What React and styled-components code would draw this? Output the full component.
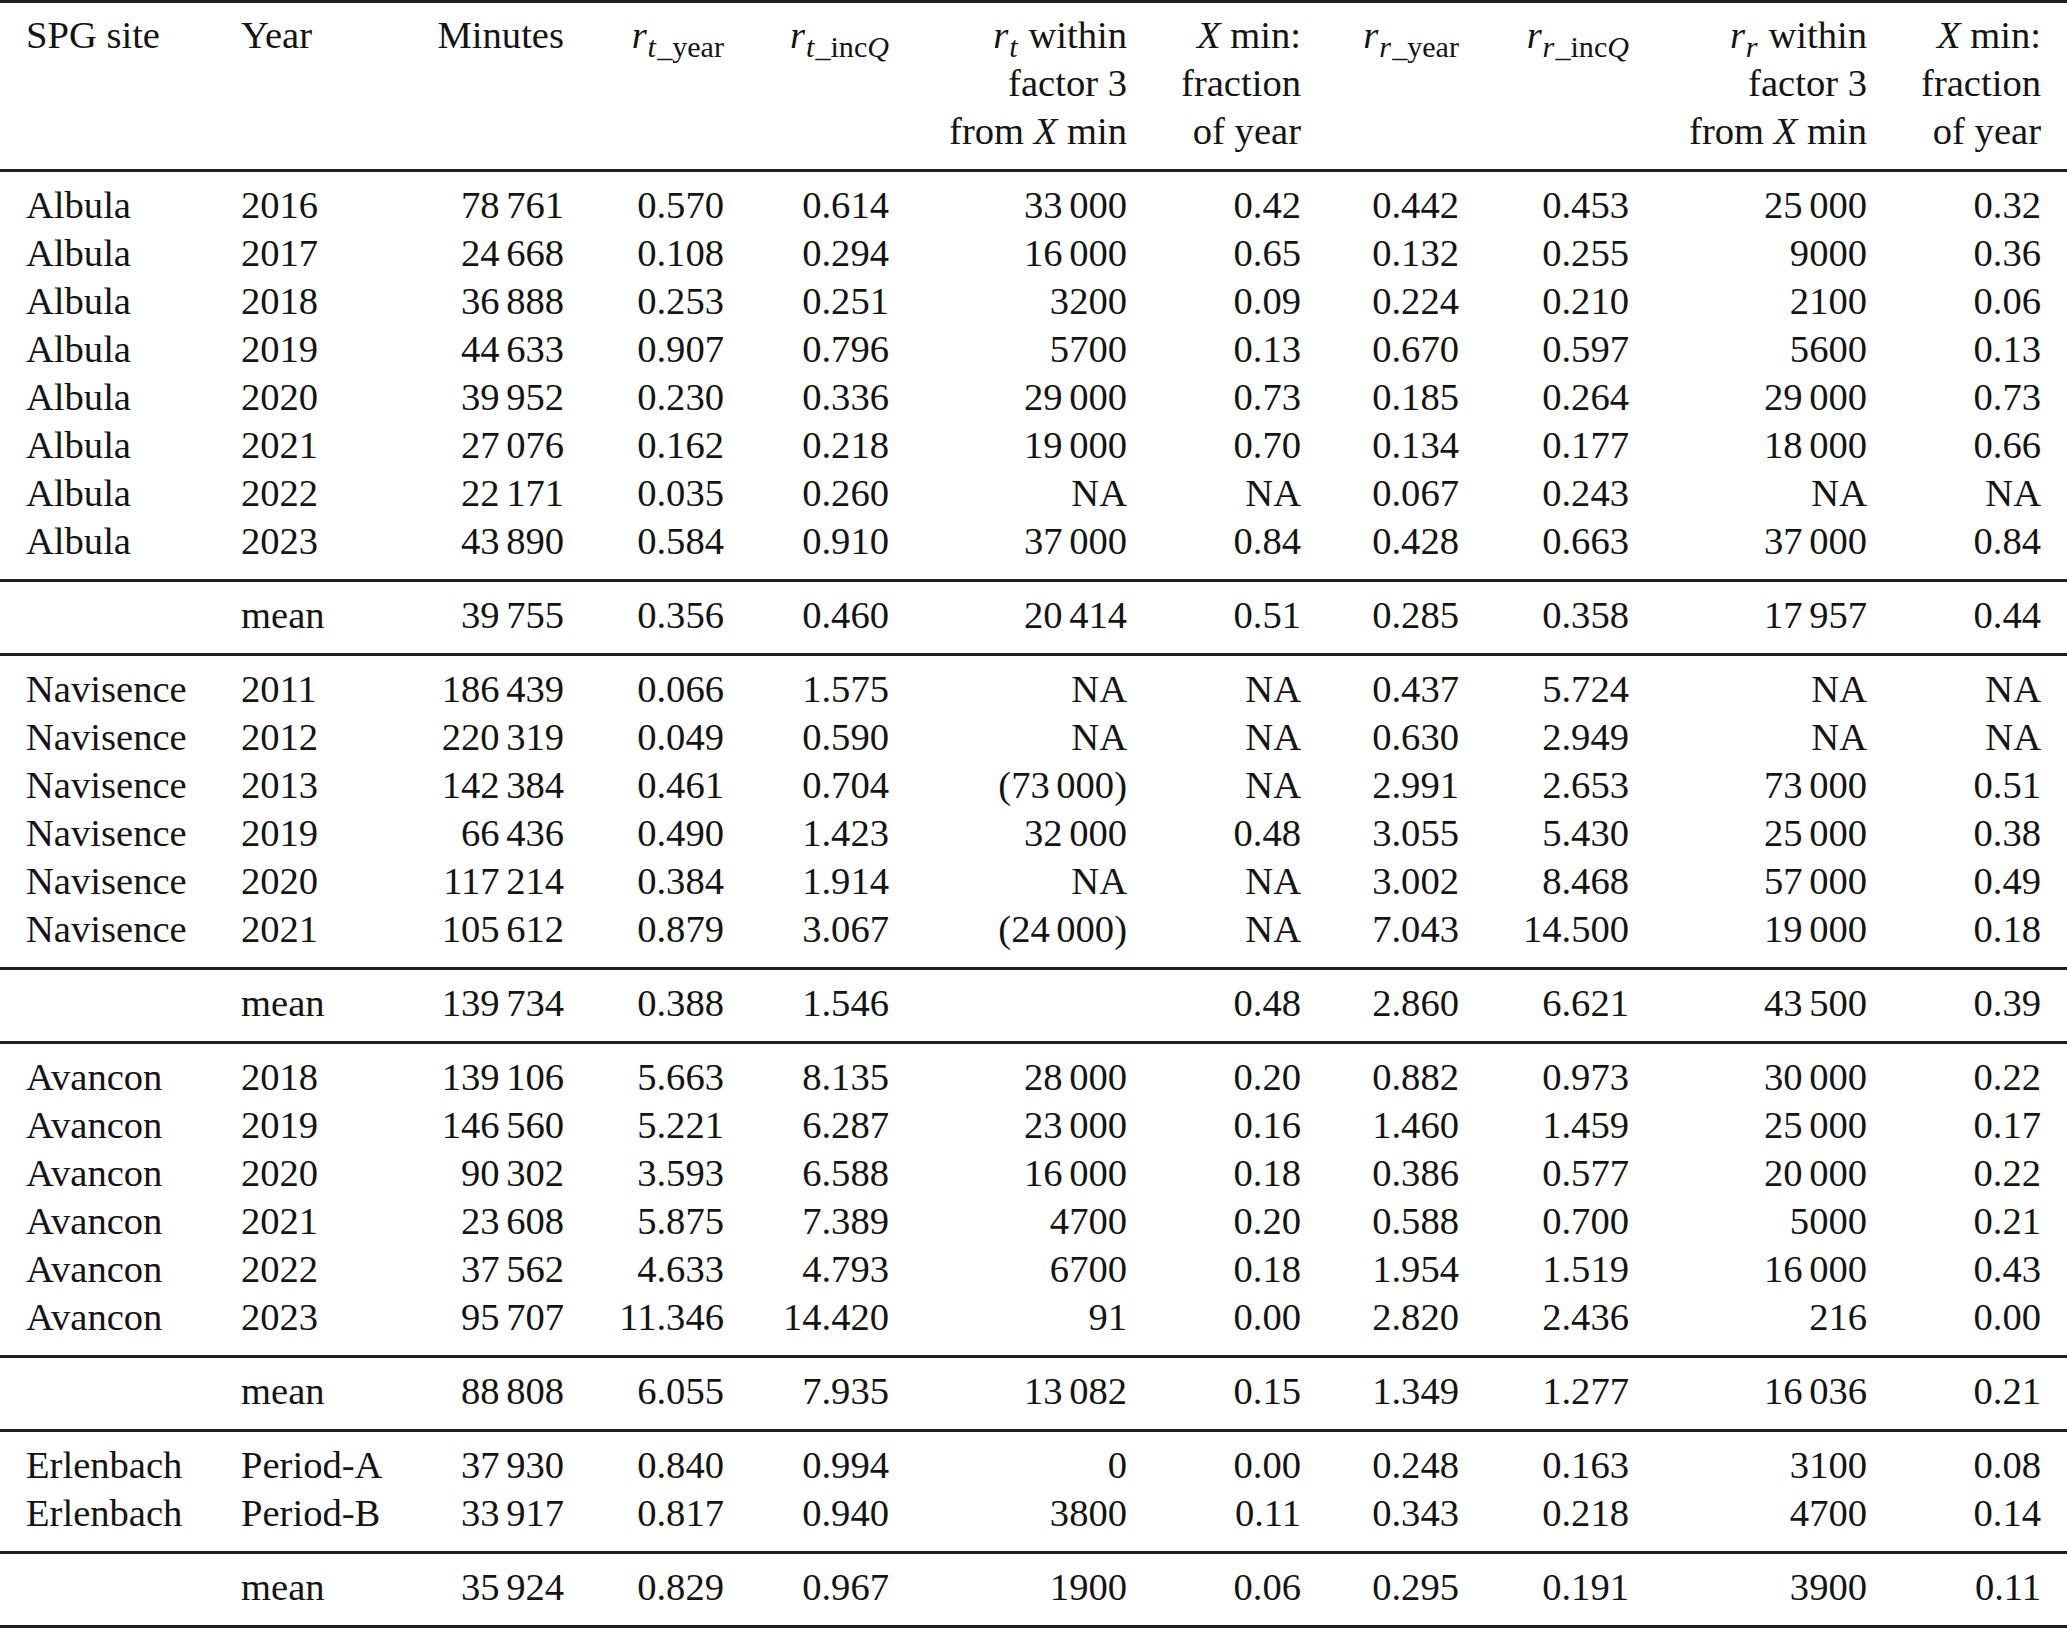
import React from "react";
import styled, { createGlobalStyle } from "styled-components";

const Global = createGlobalStyle`
  html, body { margin: 0; padding: 0; background: #ffffff; }
  body { font-family: "Liberation Serif", "Times New Roman", serif; color: #141414; }
`;

const COLS = "220px 180px 164px 160px 165px 238px 174px 158px 170px 238px 200px";

const Table = styled.div`
  width: 2067px;
  font-size: 38.6px;
  line-height: 48px;
  border-top: 3px solid #1e1e1e;
`;

const Head = styled.div`
  display: grid;
  grid-template-columns: ${COLS};
  align-items: start;
  padding: 8px 0 14px;
  border-bottom: 3px solid #1e1e1e;
`;

const Group = styled.div`
  padding: 9px 0 14px;
  border-bottom: 3px solid #1e1e1e;
`;

const Row = styled.div`
  display: grid;
  grid-template-columns: ${COLS};
  height: 48px;
`;

const Cell = styled.div`
  white-space: nowrap;
  text-align: ${(p) => (p.$left ? "left" : "right")};
  padding-left: ${(p) => p.$pl || 0}px;
  padding-right: ${(p) => p.$pr || 0}px;
`;

const Thin = styled.span`
  display: inline-block;
  width: 0.17em;
`;

const I = styled.i`
  font-style: italic;
`;

const Sub = styled.sub`
  font-size: 0.78em;
  line-height: 0;
  vertical-align: -0.3em;
`;

const SubVar = styled.i`
  font-style: italic;
  margin-left: 0.03em;
  margin-right: 0.04em;
`;

function num(s) {
  const parts = String(s).split(" ");
  return parts.map((p, i) => (
    <React.Fragment key={i}>
      {i > 0 && <Thin />}
      {p}
    </React.Fragment>
  ));
}

function cellProps(i) {
  if (i === 0) return { $left: true, $pl: 26 };
  if (i === 1) return { $left: true, $pl: 21 };
  if (i === 10) return { $pr: 26 };
  return {};
}

const R = ({ s, sub }) => (
  <>
    <I>r</I>
    <Sub>
      <SubVar>{s}</SubVar>
      {sub}
    </Sub>
  </>
);

const header = [
  "SPG site",
  "Year",
  "Minutes",
  <R s="t" sub="_year" />,
  <R s="t" sub={<>_inc<I>Q</I></>} />,
  <>
    <R s="t" /> within
    <br />
    factor 3
    <br />
    from <I>X</I> min
  </>,
  <>
    <I>X</I> min:
    <br />
    fraction
    <br />
    of year
  </>,
  <R s="r" sub="_year" />,
  <R s="r" sub={<>_inc<I>Q</I></>} />,
  <>
    <R s="r" /> within
    <br />
    factor 3
    <br />
    from <I>X</I> min
  </>,
  <>
    <I>X</I> min:
    <br />
    fraction
    <br />
    of year
  </>,
];

const groups = [
  [
    ["Albula", "2016", "78 761", "0.570", "0.614", "33 000", "0.42", "0.442", "0.453", "25 000", "0.32"],
    ["Albula", "2017", "24 668", "0.108", "0.294", "16 000", "0.65", "0.132", "0.255", "9000", "0.36"],
    ["Albula", "2018", "36 888", "0.253", "0.251", "3200", "0.09", "0.224", "0.210", "2100", "0.06"],
    ["Albula", "2019", "44 633", "0.907", "0.796", "5700", "0.13", "0.670", "0.597", "5600", "0.13"],
    ["Albula", "2020", "39 952", "0.230", "0.336", "29 000", "0.73", "0.185", "0.264", "29 000", "0.73"],
    ["Albula", "2021", "27 076", "0.162", "0.218", "19 000", "0.70", "0.134", "0.177", "18 000", "0.66"],
    ["Albula", "2022", "22 171", "0.035", "0.260", "NA", "NA", "0.067", "0.243", "NA", "NA"],
    ["Albula", "2023", "43 890", "0.584", "0.910", "37 000", "0.84", "0.428", "0.663", "37 000", "0.84"],
  ],
  [["", "mean", "39 755", "0.356", "0.460", "20 414", "0.51", "0.285", "0.358", "17 957", "0.44"]],
  [
    ["Navisence", "2011", "186 439", "0.066", "1.575", "NA", "NA", "0.437", "5.724", "NA", "NA"],
    ["Navisence", "2012", "220 319", "0.049", "0.590", "NA", "NA", "0.630", "2.949", "NA", "NA"],
    ["Navisence", "2013", "142 384", "0.461", "0.704", "(73 000)", "NA", "2.991", "2.653", "73 000", "0.51"],
    ["Navisence", "2019", "66 436", "0.490", "1.423", "32 000", "0.48", "3.055", "5.430", "25 000", "0.38"],
    ["Navisence", "2020", "117 214", "0.384", "1.914", "NA", "NA", "3.002", "8.468", "57 000", "0.49"],
    ["Navisence", "2021", "105 612", "0.879", "3.067", "(24 000)", "NA", "7.043", "14.500", "19 000", "0.18"],
  ],
  [["", "mean", "139 734", "0.388", "1.546", "", "0.48", "2.860", "6.621", "43 500", "0.39"]],
  [
    ["Avancon", "2018", "139 106", "5.663", "8.135", "28 000", "0.20", "0.882", "0.973", "30 000", "0.22"],
    ["Avancon", "2019", "146 560", "5.221", "6.287", "23 000", "0.16", "1.460", "1.459", "25 000", "0.17"],
    ["Avancon", "2020", "90 302", "3.593", "6.588", "16 000", "0.18", "0.386", "0.577", "20 000", "0.22"],
    ["Avancon", "2021", "23 608", "5.875", "7.389", "4700", "0.20", "0.588", "0.700", "5000", "0.21"],
    ["Avancon", "2022", "37 562", "4.633", "4.793", "6700", "0.18", "1.954", "1.519", "16 000", "0.43"],
    ["Avancon", "2023", "95 707", "11.346", "14.420", "91", "0.00", "2.820", "2.436", "216", "0.00"],
  ],
  [["", "mean", "88 808", "6.055", "7.935", "13 082", "0.15", "1.349", "1.277", "16 036", "0.21"]],
  [
    ["Erlenbach", "Period-A", "37 930", "0.840", "0.994", "0", "0.00", "0.248", "0.163", "3100", "0.08"],
    ["Erlenbach", "Period-B", "33 917", "0.817", "0.940", "3800", "0.11", "0.343", "0.218", "4700", "0.14"],
  ],
  [["", "mean", "35 924", "0.829", "0.967", "1900", "0.06", "0.295", "0.191", "3900", "0.11"]],
];

export default function App() {
  return (
    <>
      <Global />
      <Table>
        <Head>
          {header.map((h, i) => (
            <Cell key={i} {...cellProps(i)}>
              {h}
            </Cell>
          ))}
        </Head>
        {groups.map((g, gi) => (
          <Group key={gi}>
            {g.map((row, ri) => (
              <Row key={ri}>
                {row.map((c, ci) => (
                  <Cell key={ci} {...cellProps(ci)}>
                    {ci < 2 ? c : num(c)}
                  </Cell>
                ))}
              </Row>
            ))}
          </Group>
        ))}
      </Table>
    </>
  );
}
